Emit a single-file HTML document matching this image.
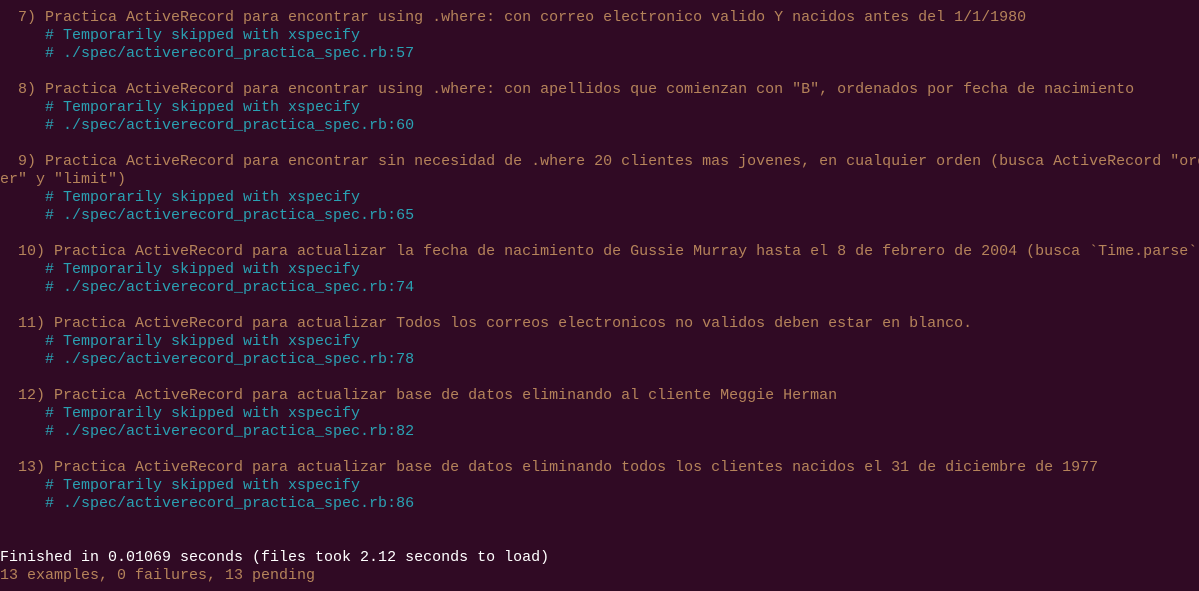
<!DOCTYPE html>
<html><head><meta charset="utf-8"><style>
html,body{margin:0;padding:0;background:#300a24;width:1199px;height:591px;overflow:hidden}
pre{margin:0;padding-top:9px;font-family:"Liberation Mono","DejaVu Sans Mono",monospace;font-size:15px;line-height:18px;color:#b5835a;white-space:pre}
.c{color:#2aa1b3}.w{color:#ffffff}
</style></head><body><pre>  7) Practica ActiveRecord para encontrar using .where: con correo electronico valido Y nacidos antes del 1/1/1980
<span class="c">     # Temporarily skipped with xspecify
     # ./spec/activerecord_practica_spec.rb:57</span>

  8) Practica ActiveRecord para encontrar using .where: con apellidos que comienzan con "B", ordenados por fecha de nacimiento
<span class="c">     # Temporarily skipped with xspecify
     # ./spec/activerecord_practica_spec.rb:60</span>

  9) Practica ActiveRecord para encontrar sin necesidad de .where 20 clientes mas jovenes, en cualquier orden (busca ActiveRecord "ord
er" y "limit")
<span class="c">     # Temporarily skipped with xspecify
     # ./spec/activerecord_practica_spec.rb:65</span>

  10) Practica ActiveRecord para actualizar la fecha de nacimiento de Gussie Murray hasta el 8 de febrero de 2004 (busca `Time.parse`)
<span class="c">     # Temporarily skipped with xspecify
     # ./spec/activerecord_practica_spec.rb:74</span>

  11) Practica ActiveRecord para actualizar Todos los correos electronicos no validos deben estar en blanco.
<span class="c">     # Temporarily skipped with xspecify
     # ./spec/activerecord_practica_spec.rb:78</span>

  12) Practica ActiveRecord para actualizar base de datos eliminando al cliente Meggie Herman
<span class="c">     # Temporarily skipped with xspecify
     # ./spec/activerecord_practica_spec.rb:82</span>

  13) Practica ActiveRecord para actualizar base de datos eliminando todos los clientes nacidos el 31 de diciembre de 1977
<span class="c">     # Temporarily skipped with xspecify
     # ./spec/activerecord_practica_spec.rb:86</span>


<span class="w">Finished in 0.01069 seconds (files took 2.12 seconds to load)</span>
13 examples, 0 failures, 13 pending</pre></body></html>
